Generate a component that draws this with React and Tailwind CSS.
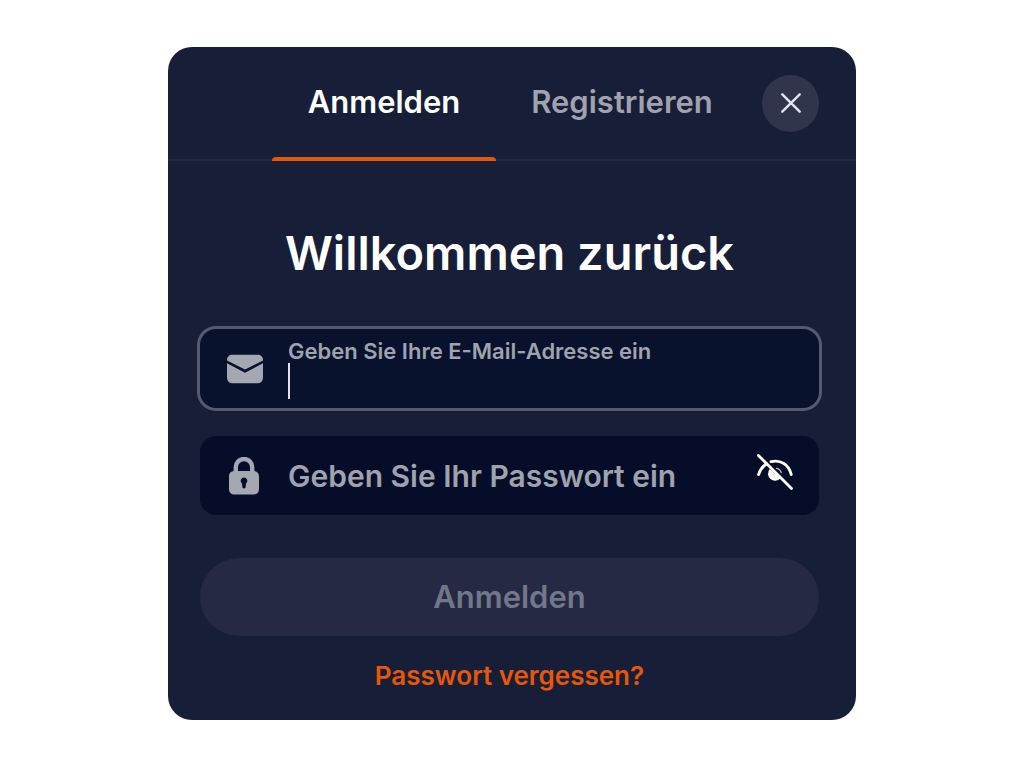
import { useState } from "react";

const TABS = [
  { id: "login", label: "Anmelden", className: "w-[224px]" },
  { id: "register", label: "Registrieren", className: "w-[252px]" },
];

function MailIcon() {
  return (
    <svg width="36" height="30" viewBox="0 0 36 30" fill="currentColor" aria-hidden>
      <path d="M0 6.2C0 2.6 2.2.7 5.4.7h25.2c3.2 0 5.4 1.9 5.4 5.500v.3L18 15.400 0 6.500Z" />
      <path d="M0 9.300 18 18.800 36 9.300V23c0 4.300-2.100 6.300-6.200 6.300H6.200C2.100 29.300 0 27.300 0 23Z" />
    </svg>
  );
}

function LockIcon() {
  return (
    <svg width="32" height="38" viewBox="0 0 32 38" aria-hidden>
      <path
        d="M7.800 16V10.200a8.200 8.200 0 0 1 16.400 0V16"
        fill="none"
        stroke="currentColor"
        strokeWidth="4.400"
      />
      <path
        fill="currentColor"
        fillRule="evenodd"
        d="M6.500 14h19c3.400 0 5.500 2.200 5.500 5.500V32c0 3.600-2.200 5.500-5.500 5.500h-19C3.200 37.500 1 35.600 1 32V19.500C1 16.200 3.100 14 6.500 14ZM16 20.600a3.300 3.300 0 0 0-2 5.900l.3 3.200a1.700 1.700 0 0 0 3.400 0l.3-3.200a3.300 3.300 0 0 0-2-5.900Z"
      />
    </svg>
  );
}

function EyeOffIcon() {
  return (
    <svg width="36" height="36" viewBox="0 0 36 36" fill="none" aria-hidden>
      <path
        d="M1.600 20.500C3 16 5.600 12.300 9.600 9.700M14 7.700C23.500 5.300 32 10.500 34.200 20.500"
        stroke="currentColor"
        strokeWidth="2.900"
        strokeLinecap="round"
      />
      <path d="M12.700 15 23.500 24.200A7 7 0 1 1 12.700 15Z" fill="currentColor" />
      <path
        d="M19.500 14.300c2.300.4 4.100 2 4.800 4.400"
        stroke="currentColor"
        strokeWidth="1.300"
        strokeLinecap="round"
        opacity="0.7"
      />
      <path d="M1.400 1.400 34.500 34.500" stroke="currentColor" strokeWidth="2.800" strokeLinecap="round" />
    </svg>
  );
}

export default function App() {
  const [tab, setTab] = useState("login");
  const [email, setEmail] = useState("");
  const [password, setPassword] = useState("");
  const [showPassword, setShowPassword] = useState(false);

  const canSubmit = email.length > 0 && password.length > 0;

  return (
    <main className="min-h-screen bg-white px-4 py-[47px] font-['Inter',sans-serif] font-semibold">
      <div className="mx-auto w-full max-w-[688px] rounded-3xl bg-[#171e37] overflow-hidden">
        <header className="flex h-[114px] items-stretch justify-end border-b-2 border-[#232941] pr-[37px]">
          <nav className="flex" aria-label="Konto">
            {TABS.map((item) => (
              <button
                key={item.id}
                type="button"
                onClick={() => setTab(item.id)}
                className={`${item.className} -mb-[2px] flex flex-col items-center text-[31px] leading-9 ${
                  tab === item.id ? "text-white" : "text-[#a0a2ae]"
                }`}
              >
                <span className="flex flex-1 items-center">{item.label}</span>
                <span
                  className={`h-1 w-full rounded-t ${
                    tab === item.id ? "bg-[#e6570a]" : "bg-transparent"
                  }`}
                />
              </button>
            ))}
          </nav>
          <button
            type="button"
            aria-label="Schließen"
            className="ml-[14px] flex size-[57px] shrink-0 items-center justify-center self-center rounded-full bg-[#30344d] text-[#e3e3e6]"
          >
            <svg width="20" height="20" viewBox="0 0 20 20" aria-hidden>
              <path
                d="M1.300 1.300 18.700 18.700M18.700 1.300 1.300 18.700"
                stroke="currentColor"
                strokeWidth="2.400"
                strokeLinecap="round"
              />
            </svg>
          </button>
        </header>

        <form
          className="flex flex-col pb-7 pl-8 pr-[37px] pt-16"
          onSubmit={(e) => e.preventDefault()}
        >
          <h1 className="text-center text-[47px] leading-[56px] text-white">
            Willkommen zurück
          </h1>

          <div className="mt-12 flex h-[79px] items-center rounded-2xl bg-[#08122c] pl-[27px] pr-6 ring-3 ring-[#555a70]">
            <span className="w-[61px] shrink-0 text-[#a5a7b1]">
              <MailIcon />
            </span>
            <div className="relative flex-1">
              <label htmlFor="email" className="block text-[22px] leading-6 text-[#a0a2ae]">
                Geben Sie Ihre E-Mail-Adresse ein
              </label>
              <input
                id="email"
                type="email"
                value={email}
                onChange={(e) => setEmail(e.target.value)}
                className={`block h-9 w-full bg-transparent text-2xl text-white outline-none ${
                  email ? "caret-white" : "caret-transparent"
                }`}
              />
              {!email && (
                <span className="pointer-events-none absolute bottom-0 left-0 h-9 w-[2px] bg-[#e3e3e6]" />
              )}
            </div>
          </div>

          <div className="mt-7 flex h-[79px] items-center rounded-2xl bg-[#050d28] pl-7 pr-[26px]">
            <label htmlFor="password" className="w-[60px] shrink-0 text-[#a5a7b1]">
              <LockIcon />
            </label>
            <input
              id="password"
              type={showPassword ? "text" : "password"}
              aria-label="Passwort"
              value={password}
              onChange={(e) => setPassword(e.target.value)}
              placeholder="Geben Sie Ihr Passwort ein"
              className="h-full min-w-0 flex-1 bg-transparent text-[30px] text-white outline-none placeholder:text-[#a0a2ae]"
            />
            <button
              type="button"
              aria-label="Passwort anzeigen"
              onClick={() => setShowPassword(!showPassword)}
              className="mb-2 shrink-0 text-white"
            >
              <EyeOffIcon />
            </button>
          </div>

          <button
            type="submit"
            disabled={!canSubmit}
            className="mt-[43px] h-[78px] rounded-full bg-[#252943] text-[31px] text-[#73778a]"
          >
            Anmelden
          </button>

          <a
            href="#passwort"
            className="mt-6 self-center text-[26px] leading-8 text-[#e6570a]"
          >
            Passwort vergessen?
          </a>
        </form>
      </div>
    </main>
  );
}
